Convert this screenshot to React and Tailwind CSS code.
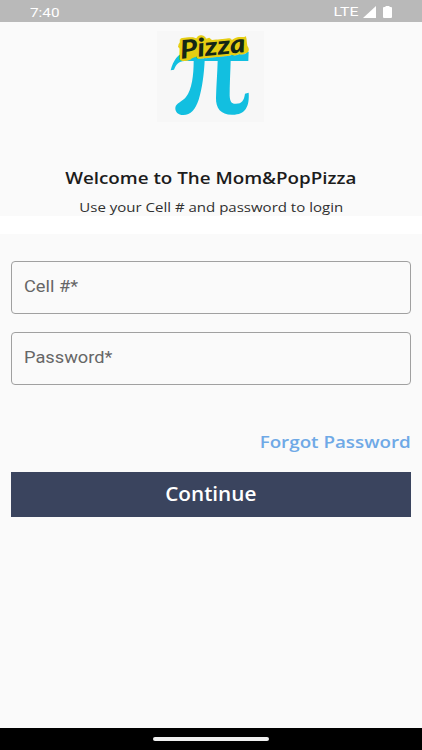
import React, { useState } from 'react';

const Logo = () => (
  <svg viewBox="21 18 321 273" className="w-[107px] h-[91px] -ml-[2px] bg-[#f7f7f7] overflow-visible" aria-label="Pizza Pi">
    <path
      fill="#12bfe0"
      d="M62 136 C70 108 82 84 112 82 L296 80 L295 108 L242 108 C241 140 239 180 239 212 C240 230 245 237 258 236 C276 236 282 226 285 206 L296 203 C299 244 286 269 248 269 C213 270 197 250 198 218 C199 180 202 145 203 108 L164 108 C162 145 157 190 146 224 C137 252 122 270 100 270 C84 270 75 260 76 248 C78 234 96 231 108 216 C126 194 131 150 131 108 L104 108 C86 108 78 120 72 134 Z"
    />
    {/* badge behind the word */}
    <path
      fill="#e6ce12"
      d="M84 66 Q84 46 116 42 Q144 36 152 46 L178 38 L192 50 L262 44 L288 34 L292 62 Q302 76 290 84 L230 91 L156 98 L142 94 L126 100 Q118 110 96 108 L98 78 Z"
    />
    <text
      x="93"
      y="101"
      transform="rotate(-6 93 101)"
      textLength="196"
      lengthAdjust="spacingAndGlyphs"
      fill="#142716"
      stroke="#e6ce12"
      strokeWidth="13"
      strokeLinejoin="round"
      paintOrder="stroke"
      className="font-['Lato','Open_Sans',sans-serif] font-black italic text-[76px]"
    >
      Pizza
    </text>
  </svg>
);

const StatusBar = () => (
  <div className="h-[22px] shrink-0 bg-[#b9b9b9] text-white flex items-center justify-between pl-[30px] pr-[30px] font-['Roboto',sans-serif]">
    <span className="text-[13px] leading-none pt-[3px] inline-block origin-left scale-x-[1.18]">7:40</span>
    <div className="flex items-center">
      <span className="text-[13px] leading-none pt-[1px] inline-block origin-right scale-x-[1.22]">LTE</span>
      <svg viewBox="0 0 14 12" className="w-[13px] h-[12px] ml-[5px] mt-px" fill="currentColor" preserveAspectRatio="none">
        <path d="M14 0V12H0Z" />
      </svg>
      <svg viewBox="0 0 9 12" className="w-[9px] h-[12px] ml-[7px] mt-px" fill="currentColor">
        <path d="M2.5 0H6.5V1H8Q9 1 9 2V11Q9 12 8 12H1Q0 12 0 11V2Q0 1 1 1H2.5Z" />
      </svg>
    </div>
  </div>
);

const Field = ({ label, type, value, onChange }) => (
  <label className="relative block h-[53px] rounded-[4px] border border-[#a0a0a0]">
    <input
      type={type}
      value={value}
      onChange={onChange}
      aria-label={label}
      className="w-full h-full px-3 bg-transparent outline-none"
    />
    {!value && (
      <span className="absolute left-[12px] top-[14px] text-[16px] leading-[22px] text-[#666666] whitespace-nowrap origin-left scale-x-[1.14] font-['Roboto',sans-serif]">
        {label}
      </span>
    )}
  </label>
);

export default function App() {
  const [cell, setCell] = useState('');
  const [password, setPassword] = useState('');

  return (
    <div className="w-full h-screen overflow-hidden flex flex-col bg-[#fafafa] font-['Open_Sans',sans-serif]">
      <StatusBar />

      {/* Logo and welcome text */}
      <header className="h-[194px] shrink-0 flex flex-col items-center pt-[9px] text-[#1c1c1c] whitespace-nowrap">
        <Logo />
        <h1 className="mt-[44px] text-[17px] leading-[24px] font-semibold scale-x-[1.105]">
          Welcome to The Mom&amp;PopPizza
        </h1>
        <p className="mt-[8px] text-[13px] leading-[18px] text-[#303030] scale-x-[1.155]">
          Use your Cell # and password to login
        </p>
      </header>
      <div className="h-[18px] shrink-0 bg-white" />

      {/* Login form */}
      <form className="flex-1 flex flex-col px-[11px] pt-[27px]" onSubmit={(e) => e.preventDefault()}>
        <Field label="Cell #*" type="tel" value={cell} onChange={(e) => setCell(e.target.value)} />
        <div className="h-[18px]" />
        <Field label="Password*" type="password" value={password} onChange={(e) => setPassword(e.target.value)} />
        <button
          type="button"
          className="self-end mt-[45px] text-[17px] leading-[24px] font-semibold text-[#6fa9e6] origin-right scale-x-[1.105]"
        >
          Forgot Password
        </button>
        <button type="submit" className="mt-[18px] h-[45px] bg-[#3a445e] text-white text-[19px] font-semibold">
          <span className="inline-block scale-x-[1.09]">Continue</span>
        </button>
      </form>

      <div className="h-[22px] shrink-0 bg-black flex justify-center pt-[9px]">
        <div className="w-[116px] h-[4px] rounded-full bg-[#f0f0f0]" />
      </div>
    </div>
  );
}
